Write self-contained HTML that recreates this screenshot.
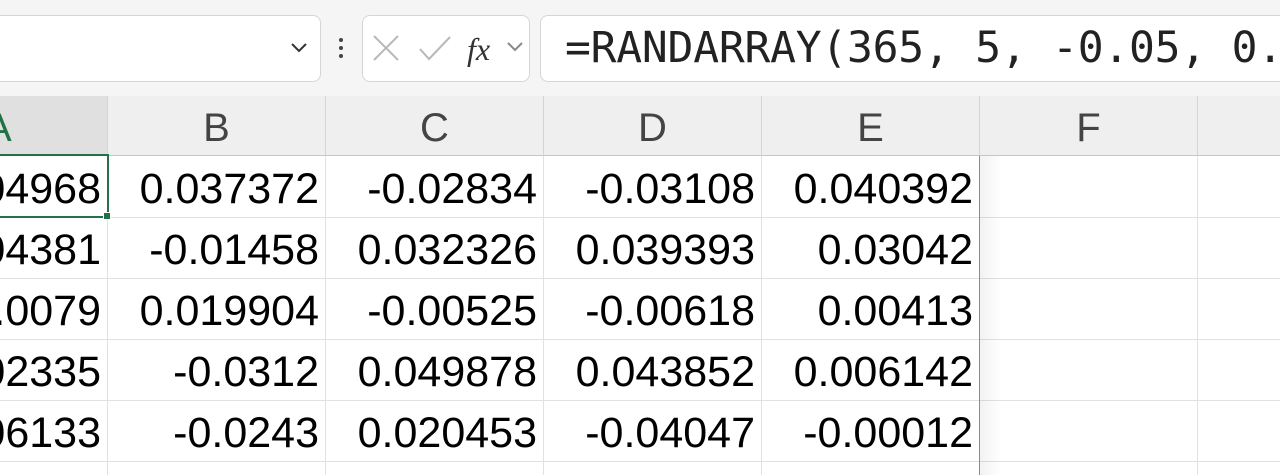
<!DOCTYPE html>
<html><head><meta charset="utf-8"><style>
*{margin:0;padding:0;box-sizing:border-box}
body{width:1280px;height:475px;overflow:hidden;background:#fff;font-family:"Liberation Sans",sans-serif;position:relative}
.top{position:absolute;left:0;top:0;width:1280px;height:96px;background:#f5f5f5}
.box{position:absolute;background:#fff;border:1px solid #d6d6d6;border-radius:8px;top:15px;height:67px}
.hdr{position:absolute;top:96px;height:60px;background:#efefef;border-right:1px solid #d4d4d4;border-bottom:1px solid #c6c6c6;color:#444;font-size:40px;text-align:center;line-height:64px;overflow:hidden}
.row{position:absolute;left:0;width:1280px;height:1px;background:#e1e1e1}
.vl{position:absolute;top:156px;width:1px;height:319px;background:#e1e1e1}
.c{position:absolute;height:61px;line-height:66px;font-size:43px;text-align:right;color:#000;white-space:nowrap}
.colA{position:absolute;left:0;top:156px;width:107px;height:319px;overflow:hidden}
.colA .c{left:-100px;width:201px}
</style></head><body>
<div class="top"></div>
<div class="box" style="left:0;width:321px;border-left:none;border-radius:0 8px 8px 0"></div>
<svg style="position:absolute;left:290px;top:42px" width="18" height="12"><path d="M2 2 L9 9 L16 2" fill="none" stroke="#333" stroke-width="2"/></svg>
<div style="position:absolute;left:339px;top:38px;width:4px;height:4px;background:#444;border-radius:2px"></div>
<div style="position:absolute;left:339px;top:46px;width:4px;height:4px;background:#444;border-radius:2px"></div>
<div style="position:absolute;left:339px;top:54px;width:4px;height:4px;background:#444;border-radius:2px"></div>
<div class="box" style="left:362px;width:168px"></div>
<svg style="position:absolute;left:370px;top:32px" width="160" height="36">
<path d="M4 4 L28 28 M28 4 L4 28" stroke="#b8b8b8" stroke-width="2" fill="none"/>
<path d="M50 17 L59 27 L80 5" stroke="#b8b8b8" stroke-width="2" fill="none"/>
<text x="97" y="28" font-family="Liberation Serif,serif" font-style="italic" font-size="32" fill="#333">fx</text>
<path d="M138 11 L145 18 L152 11" stroke="#888" stroke-width="2" fill="none"/>
</svg>
<div class="box" style="left:540px;width:740px;border-right:none;border-radius:8px 0 0 8px"></div>
<div style="position:absolute;left:565px;top:23px;width:715px;overflow:hidden;font-family:'DejaVu Sans Mono','Liberation Mono',monospace;font-size:43px;color:#222;white-space:nowrap;letter-spacing:-0.25px">=RANDARRAY(365, 5, -0.05, 0.</div>

<div class="hdr" style="left:0;width:108px;background:#e0e0e0;color:#217346;text-align:left"><span style="margin-left:-15px">A</span></div>
<div class="hdr" style="left:108px;width:218px">B</div>
<div class="hdr" style="left:326px;width:218px">C</div>
<div class="hdr" style="left:544px;width:218px">D</div>
<div class="hdr" style="left:762px;width:218px">E</div>
<div class="hdr" style="left:980px;width:218px">F</div>
<div class="hdr" style="left:1198px;width:82px;border-right:none"></div>

<div class="row" style="top:217px"></div><div class="row" style="top:278px"></div><div class="row" style="top:339px"></div><div class="row" style="top:400px"></div><div class="row" style="top:461px"></div>
<div class="vl" style="left:107px"></div><div class="vl" style="left:325px"></div><div class="vl" style="left:543px"></div><div class="vl" style="left:761px"></div><div class="vl" style="left:1197px"></div>
<div style="position:absolute;left:980px;top:156px;width:22px;height:319px;background:linear-gradient(to right,rgba(0,0,0,0.05),rgba(0,0,0,0))"></div>
<div style="position:absolute;left:979px;top:156px;width:1px;height:319px;background:#6b8fd0"></div>

<div class="colA">
<div class="c" style="top:0">-0.04968</div>
<div class="c" style="top:61px">0.004381</div>
<div class="c" style="top:122px">-0.0079</div>
<div class="c" style="top:183px">0.002335</div>
<div class="c" style="top:244px">0.006133</div>
</div>

<div class="c" style="left:108px;top:156px;width:211px">0.037372</div>
<div class="c" style="left:326px;top:156px;width:211px">-0.02834</div>
<div class="c" style="left:544px;top:156px;width:211px">-0.03108</div>
<div class="c" style="left:762px;top:156px;width:211px">0.040392</div>

<div class="c" style="left:108px;top:217px;width:211px">-0.01458</div>
<div class="c" style="left:326px;top:217px;width:211px">0.032326</div>
<div class="c" style="left:544px;top:217px;width:211px">0.039393</div>
<div class="c" style="left:762px;top:217px;width:211px">0.03042</div>

<div class="c" style="left:108px;top:278px;width:211px">0.019904</div>
<div class="c" style="left:326px;top:278px;width:211px">-0.00525</div>
<div class="c" style="left:544px;top:278px;width:211px">-0.00618</div>
<div class="c" style="left:762px;top:278px;width:211px">0.00413</div>

<div class="c" style="left:108px;top:339px;width:211px">-0.0312</div>
<div class="c" style="left:326px;top:339px;width:211px">0.049878</div>
<div class="c" style="left:544px;top:339px;width:211px">0.043852</div>
<div class="c" style="left:762px;top:339px;width:211px">0.006142</div>

<div class="c" style="left:108px;top:400px;width:211px">-0.0243</div>
<div class="c" style="left:326px;top:400px;width:211px">0.020453</div>
<div class="c" style="left:544px;top:400px;width:211px">-0.04047</div>
<div class="c" style="left:762px;top:400px;width:211px">-0.00012</div>

<div style="position:absolute;left:0;top:154px;width:109px;height:64px;border:2px solid #217346;border-left:none"></div>
<div style="position:absolute;left:103px;top:212px;width:8px;height:8px;background:#217346;border:1px solid #fff"></div>
</body></html>
